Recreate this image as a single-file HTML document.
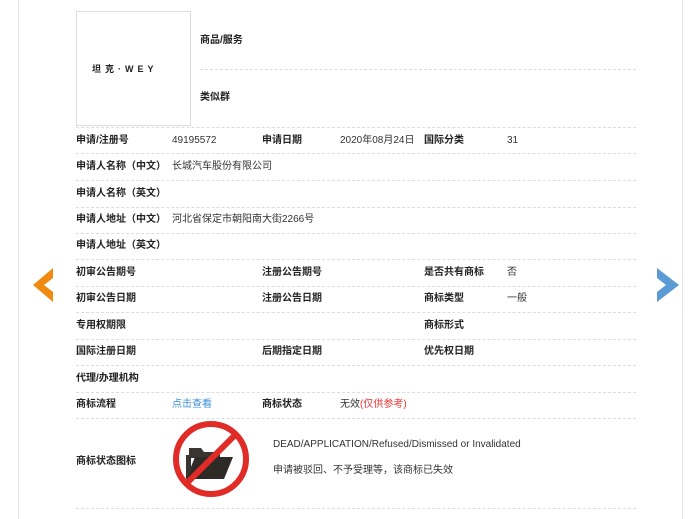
<!DOCTYPE html>
<html><head><meta charset="utf-8"><style>
body{margin:0;width:700px;height:510px;background:#fff;font-family:"Liberation Sans","Noto Sans CJK SC",sans-serif;font-size:10px;color:#333;position:relative;overflow:hidden}
.frame{position:absolute;left:18px;top:-1px;width:663px;height:520px;border-left:1px solid #e6e6e6;border-right:1px solid #e6e6e6}
.a{position:absolute;white-space:nowrap;line-height:12px}
.b{font-weight:bold;color:#222}
.l{position:absolute;left:76px;width:560px;border-top:1px dashed #ddd;height:0}
</style></head><body>
<div class="frame"></div>
<div style="position:absolute;left:76px;top:11px;width:115px;height:115px;border:1px solid #ddd;box-sizing:border-box"></div>
<div class="a b" style="left:92px;top:63px;font-size:9px;letter-spacing:4px">坦克·WEY</div>
<div class="a b" style="left:200px;top:35px">商品/服务</div>
<div class="l" style="left:200px;width:436px;top:69px"></div>
<div class="a b" style="left:200px;top:92px">类似群</div>
<div class="l" style="top:127px"></div>
<div class="l" style="top:153px"></div>
<div class="l" style="top:180px"></div>
<div class="l" style="top:207px"></div>
<div class="l" style="top:233px"></div>
<div class="l" style="top:259px"></div>
<div class="l" style="top:286px"></div>
<div class="l" style="top:312px"></div>
<div class="l" style="top:339px"></div>
<div class="l" style="top:365px"></div>
<div class="l" style="top:392px"></div>
<div class="l" style="top:418px"></div>
<div class="l" style="top:508px"></div>

<div class="a b" style="left:76px;top:135px">申请/注册号</div><div class="a" style="left:172px;top:135px">49195572</div>
<div class="a b" style="left:262px;top:135px">申请日期</div><div class="a" style="left:340px;top:135px">2020年08月24日</div>
<div class="a b" style="left:424px;top:135px">国际分类</div><div class="a" style="left:507px;top:135px">31</div>

<div class="a b" style="left:76px;top:161px">申请人名称（中文）</div><div class="a" style="left:172px;top:161px">长城汽车股份有限公司</div>
<div class="a b" style="left:76px;top:188px">申请人名称（英文）</div>
<div class="a b" style="left:76px;top:214px">申请人地址（中文）</div><div class="a" style="left:172px;top:214px">河北省保定市朝阳南大街2266号</div>
<div class="a b" style="left:76px;top:240px">申请人地址（英文）</div>

<div class="a b" style="left:76px;top:267px">初审公告期号</div>
<div class="a b" style="left:262px;top:267px">注册公告期号</div>
<div class="a b" style="left:424px;top:267px">是否共有商标</div><div class="a" style="left:507px;top:267px">否</div>

<div class="a b" style="left:76px;top:293px">初审公告日期</div>
<div class="a b" style="left:262px;top:293px">注册公告日期</div>
<div class="a b" style="left:424px;top:293px">商标类型</div><div class="a" style="left:507px;top:293px">一般</div>

<div class="a b" style="left:76px;top:320px">专用权期限</div>
<div class="a b" style="left:424px;top:320px">商标形式</div>

<div class="a b" style="left:76px;top:346px">国际注册日期</div>
<div class="a b" style="left:262px;top:346px">后期指定日期</div>
<div class="a b" style="left:424px;top:346px">优先权日期</div>

<div class="a b" style="left:76px;top:373px">代理/办理机构</div>

<div class="a b" style="left:76px;top:399px">商标流程</div><div class="a" style="left:172px;top:399px;color:#3a8fd6">点击查看</div>
<div class="a b" style="left:262px;top:399px">商标状态</div><div class="a" style="left:340px;top:399px">无效<span style="color:#e33">(仅供参考)</span></div>

<div class="a b" style="left:76px;top:456px">商标状态图标</div>
<svg style="position:absolute;left:171px;top:419px" width="80" height="80" viewBox="0 0 80 80">
<path d="M18 29h12l3 4h16v6H18z" fill="#3a3530"/>
<path d="M15 60l9-22h38l-9 22z" fill="#2e2a26"/>
<path d="M15 60V36h5v16z" fill="#3a3530"/>
<circle cx="40" cy="40" r="35" fill="none" stroke="#e02b27" stroke-width="6"/>
<line x1="15" y1="65" x2="65" y2="15" stroke="#e02b27" stroke-width="6"/>
</svg>
<div class="a" style="left:273px;top:439px">DEAD/APPLICATION/Refused/Dismissed or Invalidated</div>
<div class="a" style="left:273px;top:465px">申请被驳回、不予受理等，该商标已失效</div>

<svg style="position:absolute;left:33px;top:268px" width="20" height="34" viewBox="0 0 20 34"><path d="M20 0L0 17l20 17V24L11 17l9-7z" fill="#f08a10"/></svg>
<svg style="position:absolute;left:657px;top:268px" width="22" height="34" viewBox="0 0 22 34"><path d="M0 0l22 17L0 34V24l9-7-9-7z" fill="#5b9bd5"/></svg>
</body></html>
